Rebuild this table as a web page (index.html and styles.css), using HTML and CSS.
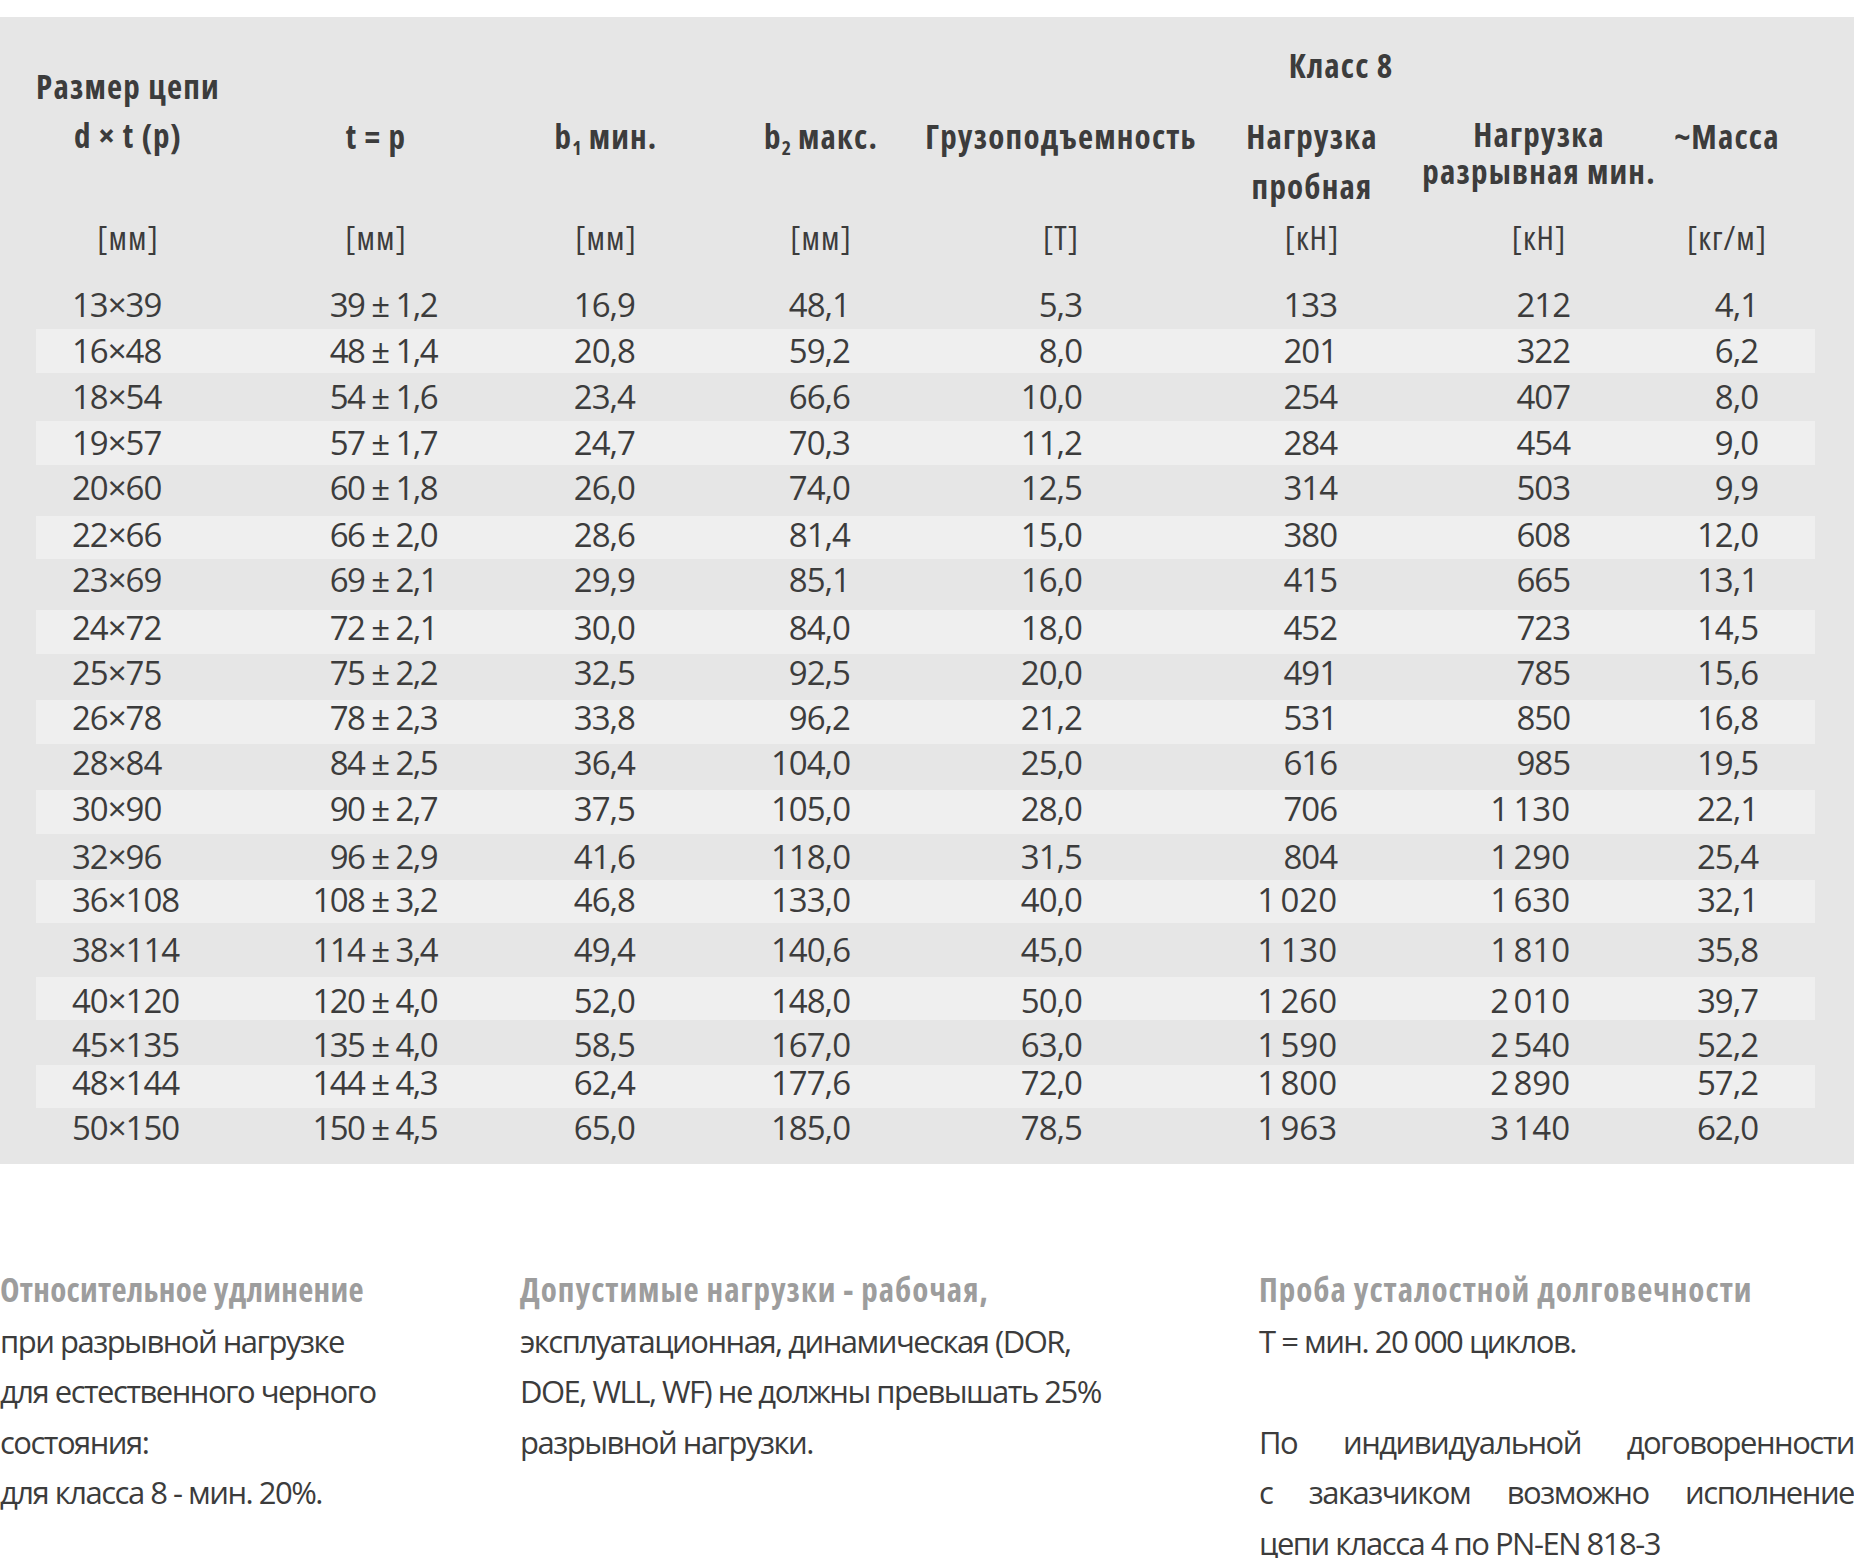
FILE: index.html
```html
<!DOCTYPE html>
<html lang="ru">
<head>
<meta charset="utf-8">
<title>Цепь класс 8</title>
<link rel="stylesheet" href="styles.css">
</head>
<body>
<section class="sheet">
  <table class="chain">
    <colgroup>
      <col class="w1"><col class="w2"><col class="w3"><col class="w4">
      <col class="w5"><col class="w6"><col class="w7"><col class="w8">
    </colgroup>
    <thead>
      <tr class="row-class">
        <th rowspan="2" class="k1 size-head">Размер цепи<br>d × t (p)</th>
        <th colspan="3"></th>
        <th colspan="4" class="klass">Класс 8</th>
      </tr>
      <tr class="row-title">
        <th class="k2">t = p</th>
        <th class="k3">b<sub>1</sub> мин.</th>
        <th class="k4">b<sub>2</sub> макс.</th>
        <th class="k5">Грузоподъемность</th>
        <th class="k6">Нагрузка<br>пробная</th>
        <th class="k7 tight">Нагрузка<br>разрывная мин.</th>
        <th class="k8">~Масса</th>
      </tr>
      <tr class="row-unit">
        <td class="k1">[мм]</td>
        <td class="k2">[мм]</td>
        <td class="k3">[мм]</td>
        <td class="k4">[мм]</td>
        <td class="k5">[Т]</td>
        <td class="k6">[кН]</td>
        <td class="k7">[кН]</td>
        <td class="k8">[кг/м]</td>
      </tr>
    </thead>
    <tbody>
      <tr><td>13×39</td><td>39 ± 1,2</td><td>16,9</td><td>48,1</td><td>5,3</td><td>133</td><td>212</td><td>4,1</td></tr>
      <tr><td>16×48</td><td>48 ± 1,4</td><td>20,8</td><td>59,2</td><td>8,0</td><td>201</td><td>322</td><td>6,2</td></tr>
      <tr><td>18×54</td><td>54 ± 1,6</td><td>23,4</td><td>66,6</td><td>10,0</td><td>254</td><td>407</td><td>8,0</td></tr>
      <tr><td>19×57</td><td>57 ± 1,7</td><td>24,7</td><td>70,3</td><td>11,2</td><td>284</td><td>454</td><td>9,0</td></tr>
      <tr><td>20×60</td><td>60 ± 1,8</td><td>26,0</td><td>74,0</td><td>12,5</td><td>314</td><td>503</td><td>9,9</td></tr>
      <tr><td>22×66</td><td>66 ± 2,0</td><td>28,6</td><td>81,4</td><td>15,0</td><td>380</td><td>608</td><td>12,0</td></tr>
      <tr><td>23×69</td><td>69 ± 2,1</td><td>29,9</td><td>85,1</td><td>16,0</td><td>415</td><td>665</td><td>13,1</td></tr>
      <tr><td>24×72</td><td>72 ± 2,1</td><td>30,0</td><td>84,0</td><td>18,0</td><td>452</td><td>723</td><td>14,5</td></tr>
      <tr><td>25×75</td><td>75 ± 2,2</td><td>32,5</td><td>92,5</td><td>20,0</td><td>491</td><td>785</td><td>15,6</td></tr>
      <tr><td>26×78</td><td>78 ± 2,3</td><td>33,8</td><td>96,2</td><td>21,2</td><td>531</td><td>850</td><td>16,8</td></tr>
      <tr><td>28×84</td><td>84 ± 2,5</td><td>36,4</td><td>104,0</td><td>25,0</td><td>616</td><td>985</td><td>19,5</td></tr>
      <tr><td>30×90</td><td>90 ± 2,7</td><td>37,5</td><td>105,0</td><td>28,0</td><td>706</td><td>1&#8239;130</td><td>22,1</td></tr>
      <tr><td>32×96</td><td>96 ± 2,9</td><td>41,6</td><td>118,0</td><td>31,5</td><td>804</td><td>1&#8239;290</td><td>25,4</td></tr>
      <tr><td>36×108</td><td>108 ± 3,2</td><td>46,8</td><td>133,0</td><td>40,0</td><td>1&#8239;020</td><td>1&#8239;630</td><td>32,1</td></tr>
      <tr><td>38×114</td><td>114 ± 3,4</td><td>49,4</td><td>140,6</td><td>45,0</td><td>1&#8239;130</td><td>1&#8239;810</td><td>35,8</td></tr>
      <tr><td>40×120</td><td>120 ± 4,0</td><td>52,0</td><td>148,0</td><td>50,0</td><td>1&#8239;260</td><td>2&#8239;010</td><td>39,7</td></tr>
      <tr><td>45×135</td><td>135 ± 4,0</td><td>58,5</td><td>167,0</td><td>63,0</td><td>1&#8239;590</td><td>2&#8239;540</td><td>52,2</td></tr>
      <tr><td>48×144</td><td>144 ± 4,3</td><td>62,4</td><td>177,6</td><td>72,0</td><td>1&#8239;800</td><td>2&#8239;890</td><td>57,2</td></tr>
      <tr><td>50×150</td><td>150 ± 4,5</td><td>65,0</td><td>185,0</td><td>78,5</td><td>1&#8239;963</td><td>3&#8239;140</td><td>62,0</td></tr>
    </tbody>
  </table>
</section>

<section class="notes">
  <div class="note note-a">
    <h3>Относительное удлинение</h3>
    <p>при разрывной нагрузке<br>для естественного черного<br>состояния:<br>для класса 8 - мин. 20%.</p>
  </div>
  <div class="note note-b">
    <h3>Допустимые нагрузки - рабочая,</h3>
    <p>эксплуатационная, динамическая (DOR,<br>DOE, WLL, WF) не должны превышать 25%<br>разрывной нагрузки.</p>
  </div>
  <div class="note note-c">
    <h3>Проба усталостной долговечности</h3>
    <p>T = мин. 20 000 циклов.</p>
    <p class="gap"><span class="jline">По индивидуальной договоренности</span><span class="jline">с заказчиком возможно исполнение</span>цепи класса 4 по PN-EN 818-3</p>
  </div>
</section>
</body>
</html>
```

FILE: styles.css
```css
* { box-sizing: border-box; }
html, body { margin: 0; padding: 0; background: #ffffff; }
body {
  width: 1854px;
  font-family: "Open Sans", "Noto Sans", "DejaVu Sans", sans-serif;
  color: #3c3c3c;
}

/* ---------- table panel ---------- */
.sheet {
  margin-top: 17px;
  background: #e6e6e6;
  padding: 24px 0 16px 36px;
}
.chain {
  border-collapse: collapse;
  border-spacing: 0;
  table-layout: fixed;
  width: 1779px;
  font-size: 33px;
}
.chain th, .chain td { padding: 0; white-space: nowrap; }
.w1 { width: 200px; } .w2 { width: 264px; } .w3 { width: 220px; } .w4 { width: 200px; }
.w5 { width: 280px; } .w6 { width: 220px; } .w7 { width: 240px; } .w8 { width: 155px; }

.chain th {
  font-weight: 700;
  font-stretch: 75%;
  letter-spacing: 1.2px;
  vertical-align: top;
  text-align: center;
  line-height: 50px;
}
.chain sub { font-size: 60%; line-height: 0; vertical-align: -0.3em; letter-spacing: 0; }

.row-class { height: 71px; }
.row-title { height: 100px; }
.row-unit { height: 69px; }

.chain .size-head { padding-top: 21px; line-height: 49px; }
.chain .klass { padding-right: 53px; }
.chain .tight { padding-top: 4px; line-height: 37px; }

.chain .row-unit td {
  vertical-align: top;
  text-align: center;
  padding-top: 1px;
  line-height: 50px;
  font-stretch: 87.5%;
  letter-spacing: 1px;
}

.chain .k1 { padding-right: 16px; }
.chain .k2 { padding-left: 16px; }
.chain .k3 { padding-right: 8px; }
.chain .k4, .chain .k5 { padding-left: 2px; }
.chain .k6 { padding-left: 4px; }
.chain .k7 { padding-right: 2px; }
.chain .k8 { padding-right: 21px; }

/* ---------- data rows ---------- */
.chain tbody td {
  line-height: 32px;
  vertical-align: middle;
  text-align: right;
  letter-spacing: -1px;
}
.chain tbody tr { height: 44px; }
.chain tbody tr:nth-child(odd) { height: 48px; }
.chain tbody tr:nth-child(even) td { background: #efefef; }
.chain tbody tr:nth-child(5),
.chain tbody tr:nth-child(7) { height: 51px; }
.chain tbody tr:nth-child(9),
.chain tbody tr:nth-child(11),
.chain tbody tr:nth-child(13) { height: 46px; }
.chain tbody tr:nth-child(15) { height: 54px; }
.chain tbody tr:nth-child(17) { height: 45px; }
.chain tbody tr:nth-child(19) { height: 40px; }
.chain tbody tr:nth-child(6),
.chain tbody tr:nth-child(14),
.chain tbody tr:nth-child(16),
.chain tbody tr:nth-child(18) { height: 43px; }

/* text sits slightly above the row middle in some rows of the original */
.chain tbody tr:nth-child(5) td,
.chain tbody tr:nth-child(6) td { padding-bottom: 5px; }
.chain tbody tr:nth-child(n+7):nth-child(-n+11) td { padding-bottom: 9px; }
.chain tbody tr:nth-child(12) td { padding-bottom: 6px; }
.chain tbody tr:nth-child(14) td { padding-bottom: 3px; }
.chain tbody tr:nth-child(16) td,
.chain tbody tr:nth-child(17) td { padding-top: 5px; }
.chain tbody tr:nth-child(18) td { padding-bottom: 7px; }

.chain tbody td:nth-child(1) { text-align: left; padding-left: 36px; }
.chain tbody td:nth-child(2) { padding-right: 63px; letter-spacing: -1.6px; }
.chain tbody td:nth-child(3) { padding-right: 85px; }
.chain tbody td:nth-child(4) { padding-right: 70px; }
.chain tbody td:nth-child(5) { padding-right: 118px; }
.chain tbody td:nth-child(6) { padding-right: 83px; }
.chain tbody td:nth-child(7) { padding-right: 90px; }
.chain tbody td:nth-child(8) { padding-right: 57px; }

/* ---------- notes ---------- */
.notes {
  display: flex;
  margin-top: 101px;
  font-size: 31px;
  letter-spacing: -1.5px;
  line-height: 50.5px;
}
.note-a { width: 520px; }
.note-b { width: 739px; }
.note-c { width: 595px; }
.note h3 {
  margin: 0;
  font-size: 33px;
  font-weight: 700;
  font-stretch: 75%;
  letter-spacing: 1px;
  line-height: 50.5px;
  color: #9d9d9d;
}
.note-a h3 { letter-spacing: 0.3px; }
.note p { margin: 0; }
.note .gap { margin-top: 50.5px; }
.jline {
  display: block;
  text-align: justify;
  text-align-last: justify;
}
```
